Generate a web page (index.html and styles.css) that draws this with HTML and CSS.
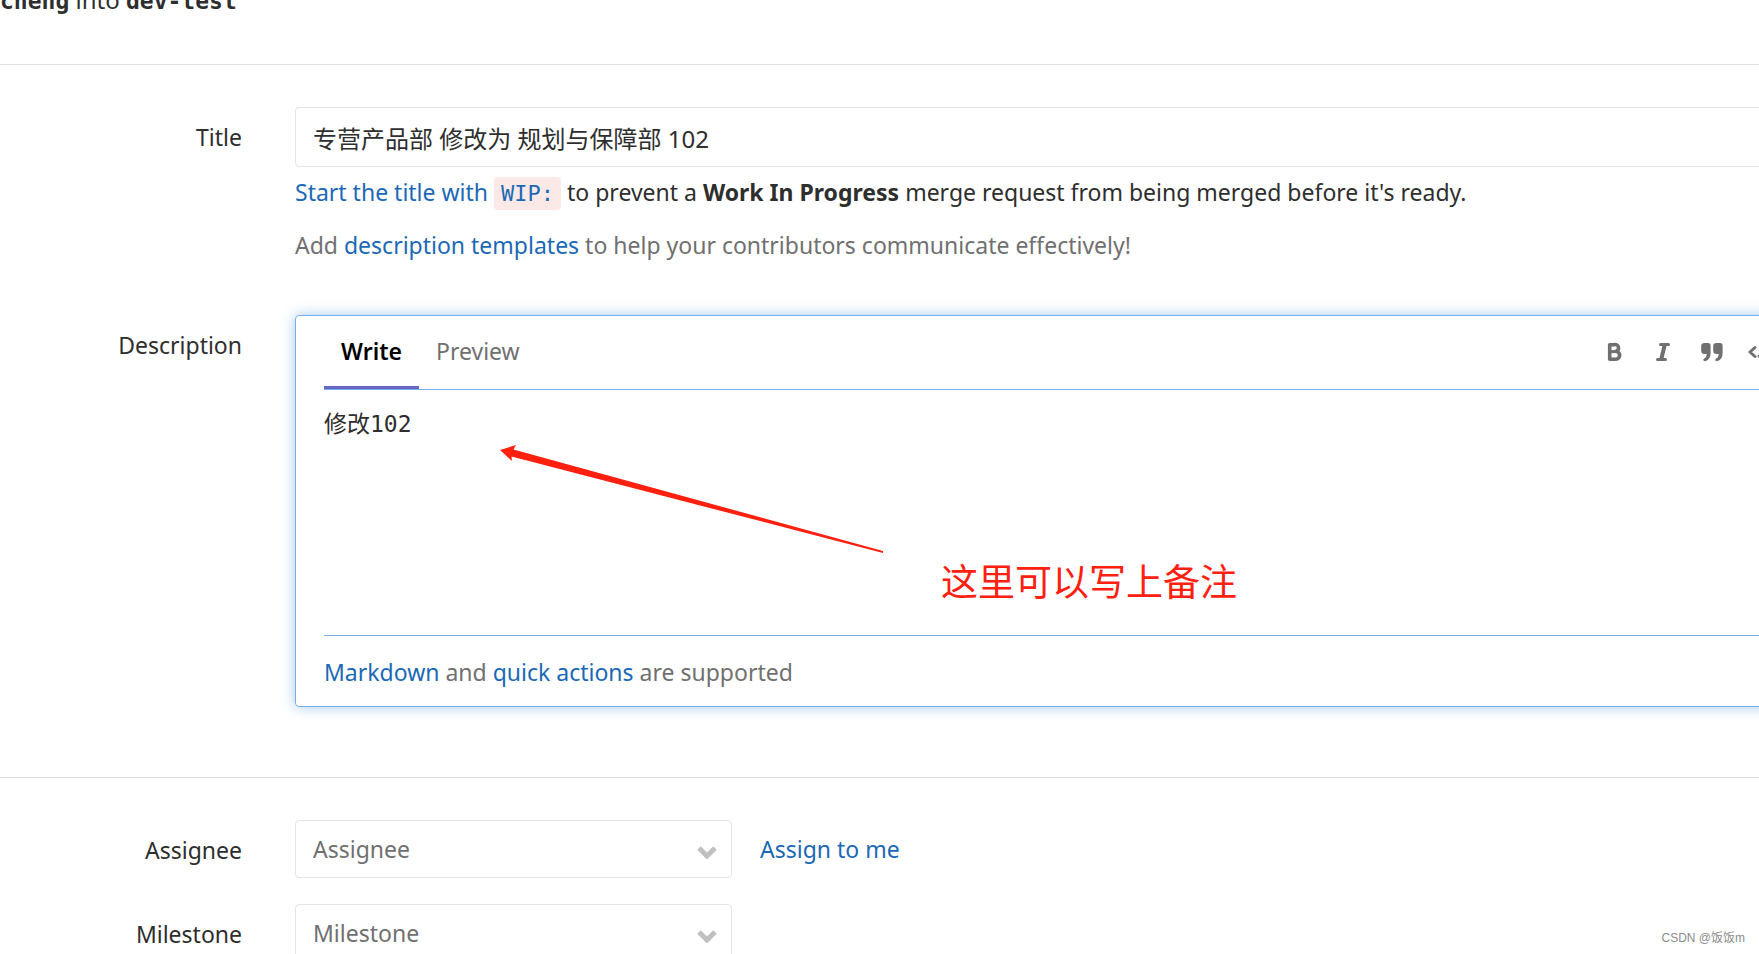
FILE: index.html
```html
<!DOCTYPE html>
<html lang="en">
<head>
    <meta charset="UTF-8">
    <meta name="viewport" content="width=device-width, initial-scale=1.0">
    <title>New Merge Request</title>
    <link rel="stylesheet" href="styles.css">
</head>
<body>

    <div class="branch-info">
        <strong class="ref-name">cheng</strong> into <strong class="ref-name">dev-test</strong>
    </div>

    <form class="merge-request-form">
        <!-- Title -->
        <div class="form-row">
            <label class="form-label" for="title">Title</label>
            <div class="form-field wide">
                <input type="text" class="form-control title-input" id="title" value="专营产品部 修改为 规划与保障部 102">
                <p class="help-text"><a href="#">Start the title with <code>WIP:</code></a> to prevent a <strong>Work In Progress</strong> merge request from being merged before it's ready.</p>
                <p class="help-text muted">Add <a href="#">description templates</a> to help your contributors communicate effectively!</p>
            </div>
        </div>

        <!-- Description -->
        <div class="form-row description-row">
            <label class="form-label" for="description">Description</label>
            <div class="form-field wide md-area">
                <div class="md-header">
                    <div class="md-tabs">
                        <button type="button" class="md-tab active">Write</button>
                        <button type="button" class="md-tab">Preview</button>
                    </div>
                    <div class="md-toolbar">
                        <button type="button" class="toolbar-btn" aria-label="Add bold text">
                            <svg viewBox="0 0 28 28"><path d="M9.700 6.700h4.600a3.400 3.400 0 0 1 1.700 6.600a3.900 3.900 0 0 1-.8 8H9.700z" fill="none" stroke="currentColor" stroke-width="3.600" stroke-linejoin="round"/><path d="M10 13.600h5.500" stroke="currentColor" stroke-width="3"/></svg>
                        </button>
                        <button type="button" class="toolbar-btn" aria-label="Add italic text">
                            <svg viewBox="0 0 28 28"><path d="M11.500 6.500h8M8.500 21.500h8" fill="none" stroke="currentColor" stroke-width="3" stroke-linecap="round"/><path d="M15.800 6.500l-3.600 15" stroke="currentColor" stroke-width="4"/></svg>
                        </button>
                        <button type="button" class="toolbar-btn" aria-label="Insert a quote">
                            <svg viewBox="0 0 28 28"><path id="quote-mark" d="M6.500 5H10q2.600 0 2.600 2.600V15q0 6.500-5 8-2 .5-2.300-1-.2-1.300 1.200-1.700 2-.7 2.200-4.300H6.500Q3.200 16 3.200 12.700V8.300Q3.200 5 6.500 5z" fill="currentColor"/><use href="#quote-mark" x="12"/></svg>
                        </button>
                        <button type="button" class="toolbar-btn" aria-label="Insert code">
                            <svg viewBox="0 0 28 28"><path d="M8 9.500l-5 4.500 5 4.500M20 9.500l5 4.500-5 4.500" fill="none" stroke="currentColor" stroke-width="3" stroke-linecap="round" stroke-linejoin="round"/><circle cx="12" cy="18" r="1.500" fill="currentColor"/></svg>
                        </button>
                    </div>
                </div>
                <textarea class="md-text" id="description">修改102</textarea>
                <div class="md-footer"><a href="#">Markdown</a> and <a href="#">quick actions</a> are supported</div>

                <!-- Note drawn over the editor -->
                <svg class="note-arrow" viewBox="0 0 384 110" aria-hidden="true"><path d="M0 6L16 1l-2.500 4.500L383 107v2L11.500 12.500l.5 4.500z"/></svg>
                <span class="note-text">这里可以写上备注</span>
            </div>
        </div>

        <hr class="divider">

        <!-- Assignee -->
        <div class="form-row select-row">
            <label class="form-label" for="assignee">Assignee</label>
            <div class="form-field inline">
                <div class="select-wrap">
                    <select class="form-control" id="assignee"><option>Assignee</option></select>
                    <svg class="chevron" viewBox="0 0 20 14" aria-hidden="true"><path d="M2 3l8 8 8-8"/></svg>
                </div>
                <a href="#">Assign to me</a>
            </div>
        </div>

        <!-- Milestone -->
        <div class="form-row select-row">
            <label class="form-label" for="milestone">Milestone</label>
            <div class="form-field inline">
                <div class="select-wrap">
                    <select class="form-control" id="milestone"><option>Milestone</option></select>
                    <svg class="chevron" viewBox="0 0 20 14" aria-hidden="true"><path d="M2 3l8 8 8-8"/></svg>
                </div>
            </div>
        </div>
    </form>

    <div class="watermark">CSDN @饭饭m</div>

</body>
</html>
```

FILE: styles.css
```css
* {
    box-sizing: border-box;
}

body {
    margin: 0;
    height: 100vh;
    overflow: hidden;
    background-color: #fff;
    color: #2e2e2e;
    font-family: "Noto Sans", "Noto Sans CJK SC", sans-serif;
    font-size: 23px;
    line-height: 36px;
}

a {
    color: #1b69b6;
    text-decoration: none;
}

/* Branch names, scrolled partly out of view */
.branch-info {
    height: 83px;
    margin-top: -18px;
    border-bottom: 1px solid #e1e1e1;
    font-size: 24px;
}

.ref-name {
    font-family: "DejaVu Sans Mono", monospace;
    font-size: 23px;
}

.merge-request-form {
    padding-top: 42px;
}

/* Form rows */
.form-row {
    display: grid;
    grid-template-columns: 242px 1fr;
    column-gap: 53px;
}

.form-label {
    padding-top: 12px;
    text-align: right;
}

.form-field {
    min-width: 0;
}

.wide {
    margin-right: -40px;
}

.form-control {
    display: block;
    width: 100%;
    height: 60px;
    padding: 0 17px;
    border: 1px solid #e5e5e5;
    border-radius: 4px;
    background-color: #fff;
    color: #2e2e2e;
    font: inherit;
    outline: none;
}

.title-input {
    font-size: 24px;
}

.help-text {
    margin: 7px 0 0;
}

.help-text + .help-text {
    margin-top: 17px;
}

.muted {
    color: #707070;
}

code {
    padding: 4px 7px;
    border-radius: 4px;
    background-color: #fbe9e7;
    font-family: "DejaVu Sans Mono", monospace;
    font-size: 22px;
    line-height: 1;
}

/* Markdown editor */
.description-row {
    margin-top: 52px;
}

.md-area {
    position: relative;
    padding: 0 28px;
    border: 1px solid #73afea;
    border-radius: 4px;
    box-shadow: 0 0 14px rgba(31, 120, 209, 0.4);
}

.md-header {
    display: flex;
    justify-content: space-between;
    height: 74px;
    border-bottom: 1px solid #73afea;
}

.md-tabs {
    display: flex;
}

.md-tab {
    padding: 0 17px;
    border: 0;
    border-bottom: 3px solid transparent;
    background: none;
    color: #707070;
    font: inherit;
}

.md-tab.active {
    border-bottom-color: #6666c4;
    color: #000;
    font-weight: 600;
}

.md-toolbar {
    display: flex;
    align-items: center;
    gap: 21px;
    margin-right: -5px;
    padding-bottom: 2px;
}

.toolbar-btn {
    display: flex;
    padding: 0;
    border: 0;
    background: none;
    color: #707070;
}

.toolbar-btn svg {
    width: 28px;
    height: 28px;
}

.md-text {
    display: block;
    width: 100%;
    height: 245px;
    padding: 16px 0;
    border: 0;
    outline: none;
    resize: none;
    color: #2e2e2e;
    font-family: "DejaVu Sans Mono", "Noto Sans CJK SC", monospace;
    font-size: 23px;
    line-height: 36px;
}

.md-footer {
    padding: 18px 0 16px;
    border-top: 1px solid #73afea;
    color: #707070;
}

.note-arrow {
    position: absolute;
    top: 128px;
    left: 204px;
    width: 384px;
    height: 110px;
    fill: #ff2010;
}

.note-text {
    position: absolute;
    top: 237px;
    left: 645px;
    color: #ff2010;
    font-family: "Noto Sans CJK SC", sans-serif;
    font-size: 37px;
    line-height: 54px;
}

.divider {
    margin: 70px 0 42px;
    border: 0;
    border-top: 1px solid #e1e1e1;
}

/* Drop-downs */
.select-row {
    margin-bottom: 26px;
}

.inline {
    display: flex;
    align-items: center;
    gap: 28px;
}

.select-wrap {
    position: relative;
    width: 437px;
}

.select-wrap .form-control {
    height: 58px;
    color: #707070;
    appearance: none;
}

.chevron {
    position: absolute;
    top: 25px;
    right: 15px;
    width: 20px;
    height: 14px;
    fill: none;
    stroke: #c0c0c0;
    stroke-width: 5;
    pointer-events: none;
}

.watermark {
    position: absolute;
    right: 14px;
    bottom: 6px;
    color: #8c8c8c;
    font-family: "Liberation Sans", "Noto Sans CJK SC", sans-serif;
    font-size: 12px;
    line-height: 20px;
}
```
